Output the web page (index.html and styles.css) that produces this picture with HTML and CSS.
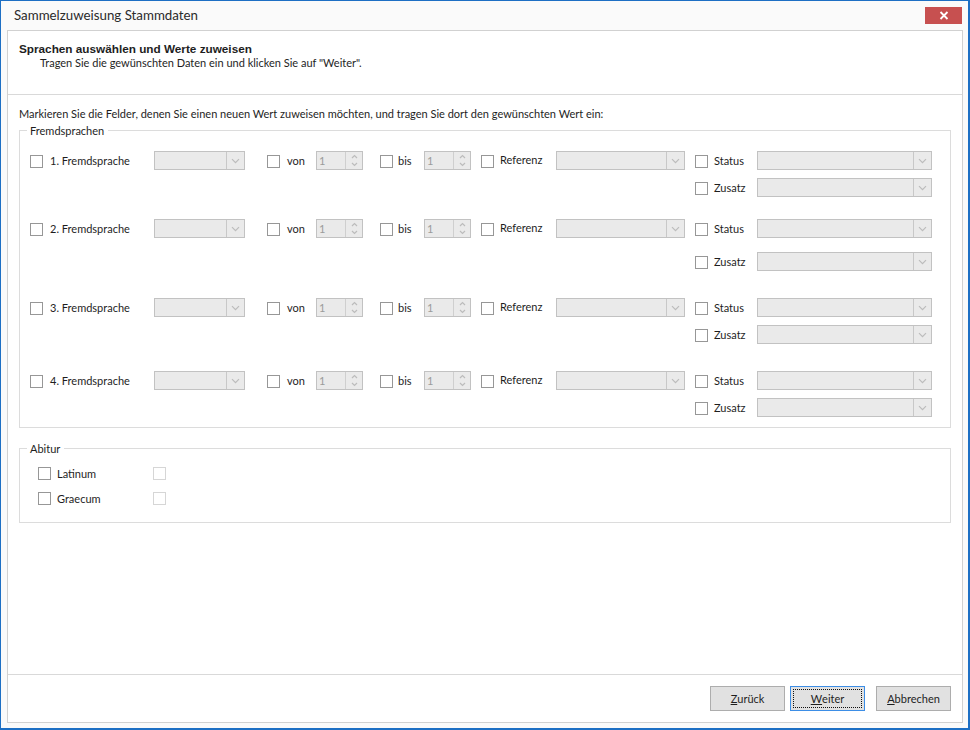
FILE: index.html
```html
<!DOCTYPE html>
<html lang="de">
<head>
<meta charset="utf-8">
<title>Sammelzuweisung Stammdaten</title>
<link rel="stylesheet" href="styles.css">
</head>
<body>
<div class="window">
  <div class="titlebar">
    <span class="title">Sammelzuweisung Stammdaten</span>
    <button class="close" aria-label="Schließen"><svg width="10" height="9" viewBox="0 0 10 9"><path d="M1.5 1l7 7M8.5 1l-7 7" stroke="#fff" stroke-width="1.8" fill="none"/></svg></button>
  </div>
  <div class="panel">
    <div class="header">
      <div class="h-title">Sprachen auswählen und Werte zuweisen</div>
      <div class="h-sub">Tragen Sie die gewünschten Daten ein und klicken Sie auf "Weiter".</div>
    </div>
    <div class="main">
      <p class="intro">Markieren Sie die Felder, denen Sie einen neuen Wert zuweisen möchten, und tragen Sie dort den gewünschten Wert ein:</p>
      <fieldset class="group lang">
        <legend>Fremdsprachen</legend>

        <div class="block b1">
          <div class="left">
            <label class="chk c-lang"><span class="box"></span><span>1. Fremdsprache</span></label>
            <div class="combo cb-lang"><span class="arrow"><svg width="9" height="6" viewBox="0 0 9 6"><path d="M1 1.2l3.5 3.5L8 1.2"/></svg></span></div>
            <label class="chk c-von"><span class="box"></span><span>von</span></label>
            <div class="spin"><span class="val">1</span><span class="sbtn"><svg width="7" height="15" viewBox="0 0 7 15"><path d="M1 5l2.5-2.5L6 5M1 10l2.5 2.5L6 10"/></svg></span></div>
            <label class="chk c-bis"><span class="box"></span><span>bis</span></label>
            <div class="spin"><span class="val">1</span><span class="sbtn"><svg width="7" height="15" viewBox="0 0 7 15"><path d="M1 5l2.5-2.5L6 5M1 10l2.5 2.5L6 10"/></svg></span></div>
            <label class="chk c-ref"><span class="box"></span><span class="up">Referenz</span></label>
            <div class="combo cb-ref"><span class="arrow"><svg width="9" height="6" viewBox="0 0 9 6"><path d="M1 1.2l3.5 3.5L8 1.2"/></svg></span></div>
          </div>
          <div class="right">
            <div class="rrow"><label class="chk c-stat"><span class="box"></span><span>Status</span></label><div class="combo cb-stat"><span class="arrow"><svg width="9" height="6" viewBox="0 0 9 6"><path d="M1 1.2l3.5 3.5L8 1.2"/></svg></span></div></div>
            <div class="rrow"><label class="chk c-stat"><span class="box"></span><span>Zusatz</span></label><div class="combo cb-stat"><span class="arrow"><svg width="9" height="6" viewBox="0 0 9 6"><path d="M1 1.2l3.5 3.5L8 1.2"/></svg></span></div></div>
          </div>
        </div>

        <div class="block b2">
          <div class="left">
            <label class="chk c-lang"><span class="box"></span><span>2. Fremdsprache</span></label>
            <div class="combo cb-lang"><span class="arrow"><svg width="9" height="6" viewBox="0 0 9 6"><path d="M1 1.2l3.5 3.5L8 1.2"/></svg></span></div>
            <label class="chk c-von"><span class="box"></span><span>von</span></label>
            <div class="spin"><span class="val">1</span><span class="sbtn"><svg width="7" height="15" viewBox="0 0 7 15"><path d="M1 5l2.5-2.5L6 5M1 10l2.5 2.5L6 10"/></svg></span></div>
            <label class="chk c-bis"><span class="box"></span><span>bis</span></label>
            <div class="spin"><span class="val">1</span><span class="sbtn"><svg width="7" height="15" viewBox="0 0 7 15"><path d="M1 5l2.5-2.5L6 5M1 10l2.5 2.5L6 10"/></svg></span></div>
            <label class="chk c-ref"><span class="box"></span><span class="up">Referenz</span></label>
            <div class="combo cb-ref"><span class="arrow"><svg width="9" height="6" viewBox="0 0 9 6"><path d="M1 1.2l3.5 3.5L8 1.2"/></svg></span></div>
          </div>
          <div class="right">
            <div class="rrow"><label class="chk c-stat"><span class="box"></span><span>Status</span></label><div class="combo cb-stat"><span class="arrow"><svg width="9" height="6" viewBox="0 0 9 6"><path d="M1 1.2l3.5 3.5L8 1.2"/></svg></span></div></div>
            <div class="rrow wide"><label class="chk c-stat"><span class="box"></span><span>Zusatz</span></label><div class="combo cb-stat"><span class="arrow"><svg width="9" height="6" viewBox="0 0 9 6"><path d="M1 1.2l3.5 3.5L8 1.2"/></svg></span></div></div>
          </div>
        </div>

        <div class="block b3">
          <div class="left">
            <label class="chk c-lang"><span class="box"></span><span>3. Fremdsprache</span></label>
            <div class="combo cb-lang"><span class="arrow"><svg width="9" height="6" viewBox="0 0 9 6"><path d="M1 1.2l3.5 3.5L8 1.2"/></svg></span></div>
            <label class="chk c-von"><span class="box"></span><span>von</span></label>
            <div class="spin"><span class="val">1</span><span class="sbtn"><svg width="7" height="15" viewBox="0 0 7 15"><path d="M1 5l2.5-2.5L6 5M1 10l2.5 2.5L6 10"/></svg></span></div>
            <label class="chk c-bis"><span class="box"></span><span>bis</span></label>
            <div class="spin"><span class="val">1</span><span class="sbtn"><svg width="7" height="15" viewBox="0 0 7 15"><path d="M1 5l2.5-2.5L6 5M1 10l2.5 2.5L6 10"/></svg></span></div>
            <label class="chk c-ref"><span class="box"></span><span class="up">Referenz</span></label>
            <div class="combo cb-ref"><span class="arrow"><svg width="9" height="6" viewBox="0 0 9 6"><path d="M1 1.2l3.5 3.5L8 1.2"/></svg></span></div>
          </div>
          <div class="right">
            <div class="rrow"><label class="chk c-stat"><span class="box"></span><span>Status</span></label><div class="combo cb-stat"><span class="arrow"><svg width="9" height="6" viewBox="0 0 9 6"><path d="M1 1.2l3.5 3.5L8 1.2"/></svg></span></div></div>
            <div class="rrow"><label class="chk c-stat"><span class="box"></span><span>Zusatz</span></label><div class="combo cb-stat"><span class="arrow"><svg width="9" height="6" viewBox="0 0 9 6"><path d="M1 1.2l3.5 3.5L8 1.2"/></svg></span></div></div>
          </div>
        </div>

        <div class="block b4">
          <div class="left">
            <label class="chk c-lang"><span class="box"></span><span>4. Fremdsprache</span></label>
            <div class="combo cb-lang"><span class="arrow"><svg width="9" height="6" viewBox="0 0 9 6"><path d="M1 1.2l3.5 3.5L8 1.2"/></svg></span></div>
            <label class="chk c-von"><span class="box"></span><span>von</span></label>
            <div class="spin"><span class="val">1</span><span class="sbtn"><svg width="7" height="15" viewBox="0 0 7 15"><path d="M1 5l2.5-2.5L6 5M1 10l2.5 2.5L6 10"/></svg></span></div>
            <label class="chk c-bis"><span class="box"></span><span>bis</span></label>
            <div class="spin"><span class="val">1</span><span class="sbtn"><svg width="7" height="15" viewBox="0 0 7 15"><path d="M1 5l2.5-2.5L6 5M1 10l2.5 2.5L6 10"/></svg></span></div>
            <label class="chk c-ref"><span class="box"></span><span class="up">Referenz</span></label>
            <div class="combo cb-ref"><span class="arrow"><svg width="9" height="6" viewBox="0 0 9 6"><path d="M1 1.2l3.5 3.5L8 1.2"/></svg></span></div>
          </div>
          <div class="right">
            <div class="rrow"><label class="chk c-stat"><span class="box"></span><span>Status</span></label><div class="combo cb-stat"><span class="arrow"><svg width="9" height="6" viewBox="0 0 9 6"><path d="M1 1.2l3.5 3.5L8 1.2"/></svg></span></div></div>
            <div class="rrow"><label class="chk c-stat"><span class="box"></span><span>Zusatz</span></label><div class="combo cb-stat"><span class="arrow"><svg width="9" height="6" viewBox="0 0 9 6"><path d="M1 1.2l3.5 3.5L8 1.2"/></svg></span></div></div>
          </div>
        </div>
      </fieldset>

      <fieldset class="group abitur">
        <legend>Abitur</legend>
        <div class="arow"><label class="achk"><span class="box"></span><span>Latinum</span></label><span class="box dis"></span></div>
        <div class="arow"><label class="achk"><span class="box"></span><span>Graecum</span></label><span class="box dis"></span></div>
      </fieldset>
    </div>
    <div class="footer">
      <button class="btn"><u>Z</u>urück</button>
      <button class="btn focus"><span class="focus-ring"><u>W</u>eiter</span></button>
      <button class="btn cancel"><u>A</u>bbrechen</button>
    </div>
  </div>
</div>
</body>
</html>
```

FILE: styles.css
```css
* { box-sizing: border-box; }
html, body { margin: 0; padding: 0; }
body {
  width: 970px;
  height: 730px;
  font-family: Lato, "Open Sans", sans-serif;
  font-size: 11px;
  color: #1e1e1e;
  background: #fafafa;
  overflow: hidden;
}
.window {
  width: 970px;
  height: 730px;
  border: solid #1d6fc4;
  border-width: 1px 2px 2px 1px;
  background: #fafafa;
  display: flex;
  flex-direction: column;
}
.titlebar {
  height: 29px;
  flex: none;
  display: flex;
  align-items: flex-start;
}
.title {
  font-size: 13.3px;
  line-height: 18px;
  padding: 5px 0 0 13px;
  color: #2b2b2b;
}
.close {
  margin: 6px 6px 0 auto;
  width: 37px;
  height: 17px;
  padding: 0;
  border: 0;
  background: #c75050;
  display: flex;
  align-items: center;
  justify-content: center;
}
.panel {
  margin: 0 5px 0 6px;
  height: 693px;
  border: 1px solid #d1d1d1;
  background: #fff;
  display: flex;
  flex-direction: column;
}
.header {
  flex: none;
  height: 64px;
  border-bottom: 1px solid #d9d9d9;
  padding: 11px 0 0 11px;
}
.h-title {
  font-family: "Liberation Sans", Arial, sans-serif;
  font-weight: bold;
  font-size: 11.75px;
  line-height: 13px;
}
.h-sub { line-height: 15px; margin: 0 0 0 21px; }
.main {
  flex: 1;
  padding: 11px 11px 0 11px;
}
.intro { margin: 0; line-height: 15px; }

fieldset.group {
  margin: 2px 0 0;
  border: 1px solid #dcdcdc;
  min-width: 0;
}
fieldset.group legend {
  line-height: 15px;
  padding: 0 4px 0 3px;
}
fieldset.lang { padding: 13px 0 10px 10px; }
fieldset.lang legend { margin-left: -3px; }

.block { display: flex; align-items: flex-start; }
.b2 { margin-top: 22px; }
.b3 { margin-top: 27px; }
.b4 { margin-top: 27px; }
.left { display: flex; align-items: flex-start; }
.right { margin-left: 10px; display: flex; flex-direction: column; gap: 8px; }
.rrow { display: flex; align-items: flex-start; }
.rrow.wide { margin-top: 6px; }

.chk {
  display: flex;
  align-items: flex-start;
  height: 19px;
  line-height: 19px;
  white-space: nowrap;
  flex: none;
}
.box {
  flex: none;
  width: 13px;
  height: 13px;
  border: 1px solid #979797;
  background: #fff;
  margin: 4px 7px 0 0;
}
.up { margin-top: -1px; }
.c-lang { width: 124px; }
.c-von { width: 49px; margin-left: 22px; }
.c-bis { width: 44px; margin-left: 17px; }
.c-bis .box { margin-right: 5px; }
.c-ref { width: 75px; margin-left: 10px; }
.c-ref .box { margin-right: 6px; }
.c-stat { width: 62px; }
.c-stat .box { margin-right: 6px; }

.combo {
  flex: none;
  height: 19px;
  border: 1px solid #c2c2c2;
  background: #eaeaea;
  display: flex;
  justify-content: flex-end;
}
.cb-lang { width: 91px; }
.cb-ref { width: 129px; }
.cb-stat { width: 175px; }
.arrow {
  width: 18px;
  border-left: 1px solid #c8c8c8;
  display: flex;
  align-items: center;
  justify-content: center;
}
.arrow path, .sbtn path {
  fill: none;
  stroke: #bcbcbc;
  stroke-width: 1.2;
}
.spin {
  flex: none;
  width: 47px;
  height: 19px;
  border: 1px solid #c2c2c2;
  background: #eaeaea;
  display: flex;
}
.val {
  flex: 1;
  line-height: 17px;
  padding-left: 2px;
  color: #9b9b9b;
}
.sbtn {
  width: 17px;
  border-left: 1px solid #cfcfcf;
  display: flex;
  align-items: center;
  justify-content: center;
}

fieldset.abitur { margin-top: 13px; padding: 10px 0 16px 18px; }
fieldset.abitur legend { margin-left: -11px; }
.arow { display: flex; align-items: center; height: 15px; }
.arow + .arow { margin-top: 10px; }
.achk { width: 115px; display: flex; align-items: center; line-height: 15px; }
.arow .box { margin: 0 6px 0 0; }
.box.dis { border-color: #d6d6d6; }

.footer {
  flex: none;
  height: 48px;
  border-top: 1px solid #d9d9d9;
  display: flex;
  justify-content: flex-end;
  align-items: flex-start;
  padding: 11px 11px 0 0;
}
.btn {
  width: 75px;
  height: 25px;
  padding: 0;
  border: 1px solid #adadad;
  background: #e1e1e1;
  font: inherit;
  color: #1e1e1e;
  display: flex;
  align-items: center;
  justify-content: center;
}
.btn.focus {
  margin-left: 5px;
  border-color: #3d8ee6;
  padding: 2px;
}
.focus-ring {
  flex: 1;
  align-self: stretch;
  border: 1px dotted #111;
  display: flex;
  align-items: center;
  justify-content: center;
}
.btn.cancel { margin-left: 11px; }
```
